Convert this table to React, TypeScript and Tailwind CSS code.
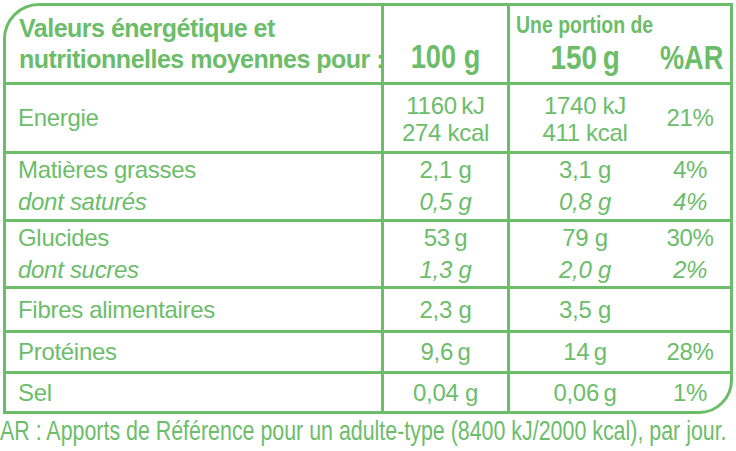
const GREEN = "text-[#6cbd6a]";

type Cell = { text: string; italic?: boolean };

type Row = {
  labels: Cell[];
  v100: Cell[];
  portion: Cell[];
  ar: Cell[];
  h: string;
};

const ROWS: Row[] = [
  {
    labels: [{ text: "Energie" }],
    v100: [{ text: "1160\u2009kJ" }, { text: "274 kcal" }],
    portion: [{ text: "1740 kJ" }, { text: "411 kcal" }],
    ar: [{ text: "21%" }],
    h: "h-[66px]",
  },
  {
    labels: [{ text: "Matières grasses" }, { text: "dont saturés", italic: true }],
    v100: [{ text: "2,1 g" }, { text: "0,5 g", italic: true }],
    portion: [{ text: "3,1 g" }, { text: "0,8 g", italic: true }],
    ar: [{ text: "4%" }, { text: "4%", italic: true }],
    h: "h-[65px]",
  },
  {
    labels: [{ text: "Glucides" }, { text: "dont sucres", italic: true }],
    v100: [{ text: "53\u2009g" }, { text: "1,3 g", italic: true }],
    portion: [{ text: "79 g" }, { text: "2,0 g", italic: true }],
    ar: [{ text: "30%" }, { text: "2%", italic: true }],
    h: "h-[64px]",
  },
  {
    labels: [{ text: "Fibres alimentaires" }],
    v100: [{ text: "2,3 g" }],
    portion: [{ text: "3,5 g" }],
    ar: [],
    h: "h-[41px]",
  },
  {
    labels: [{ text: "Protéines" }],
    v100: [{ text: "9,6\u2009g" }],
    portion: [{ text: "14\u2009g" }],
    ar: [{ text: "28%" }],
    h: "h-[38px]",
  },
  {
    labels: [{ text: "Sel" }],
    v100: [{ text: "0,04 g" }],
    portion: [{ text: "0,06\u2009g" }],
    ar: [{ text: "1%" }],
    h: "h-[37px]",
  },
];

function Lines({ items, align }: { items: Cell[]; align: string }) {
  const two = items.length > 1;
  return (
    <div className={`flex flex-col ${align} ${two ? "justify-start" : "justify-center"} h-full`}>
      {items.map((it, i) => (
        <span key={i} className={`block leading-[32px] whitespace-nowrap ${it.italic ? "italic" : ""}`}>
          {it.text}
        </span>
      ))}
    </div>
  );
}

function Energy({ items }: { items: Cell[] }) {
  return (
    <div className="flex flex-col items-center pt-[7px]">
      {items.map((v, k) => (
        <span key={k} className="block leading-[27px] whitespace-nowrap">{v.text}</span>
      ))}
    </div>
  );
}

export default function App() {
  return (
    <div
      className={`w-[736px] h-[451px] overflow-hidden bg-white ${GREEN} pt-[3px] pl-[3px]`}
      style={{ fontFamily: '"Liberation Sans", Arial, sans-serif' }}
    >
      <div className="w-[730px] border-[3px] border-[#6cbd6a] rounded-tl-[36px] rounded-br-[34px] overflow-hidden">
        {/* header */}
        <div className="flex h-[79px] border-b-[3px] border-[#6cbd6a]">
          <div className="w-[375px] pl-[13px] pt-[7px] font-bold text-[25px] leading-[31px] tracking-[-0.5px]">
            <div>Valeurs énergétique et</div>
            <div className="whitespace-nowrap">nutritionnelles moyennes pour :</div>
          </div>
          <div className="w-[126px] border-l-[3px] border-[#6cbd6a] flex items-end justify-center pb-[9px]">
            <span className="inline-block font-bold text-[34px] leading-[34px] scale-x-[0.8]">100 g</span>
          </div>
          <div className="w-[223px] border-l-[3px] border-[#6cbd6a] flex flex-col">
            <div className="pl-[6px] pt-[4px] font-bold text-[24px] leading-[30px] whitespace-nowrap">
              <span className="inline-block origin-left scale-x-[0.81]">Une portion de</span>
            </div>
            <div className="flex mt-auto pb-[9px]">
              <span className="w-[150px] flex justify-center">
                <span className="inline-block font-bold text-[34px] leading-[34px] scale-x-[0.82]">150{"\u2009"}g</span>
              </span>
              <span className="w-[64px] flex justify-center">
                <span className="inline-block font-bold text-[34px] leading-[34px] whitespace-nowrap scale-x-[0.8]">%AR</span>
              </span>
            </div>
          </div>
        </div>

        {ROWS.map((r, i) => (
          <div
            key={i}
            className={`flex ${i < ROWS.length - 1 ? "border-b-[3px] border-[#6cbd6a]" : ""} text-[24px] tracking-[-0.3px]`}
          >
            <div className={`w-[375px] pl-[12px] ${r.h}`}>
              <Lines items={r.labels} align="items-start" />
            </div>
            <div className={`w-[126px] border-l-[3px] border-[#6cbd6a] ${r.h}`}>
              {i === 0 ? <Energy items={r.v100} /> : <Lines items={r.v100} align="items-center" />}
            </div>
            <div className={`w-[223px] border-l-[3px] border-[#6cbd6a] flex ${r.h}`}>
              <div className="w-[150px]">
                {i === 0 ? <Energy items={r.portion} /> : <Lines items={r.portion} align="items-center" />}
              </div>
              <div className="w-[60px]">
                <Lines items={r.ar} align="items-center" />
              </div>
            </div>
          </div>
        ))}
      </div>
      <div className="w-[733px] -ml-[3px] overflow-hidden">
        <div className="w-[960px] text-[28px] leading-[34px] whitespace-nowrap origin-left scale-x-[0.764]">
          AR : Apports de Référence pour un adulte-type (8400 kJ/2000 kcal), par jour.
        </div>
      </div>
    </div>
  );
}
